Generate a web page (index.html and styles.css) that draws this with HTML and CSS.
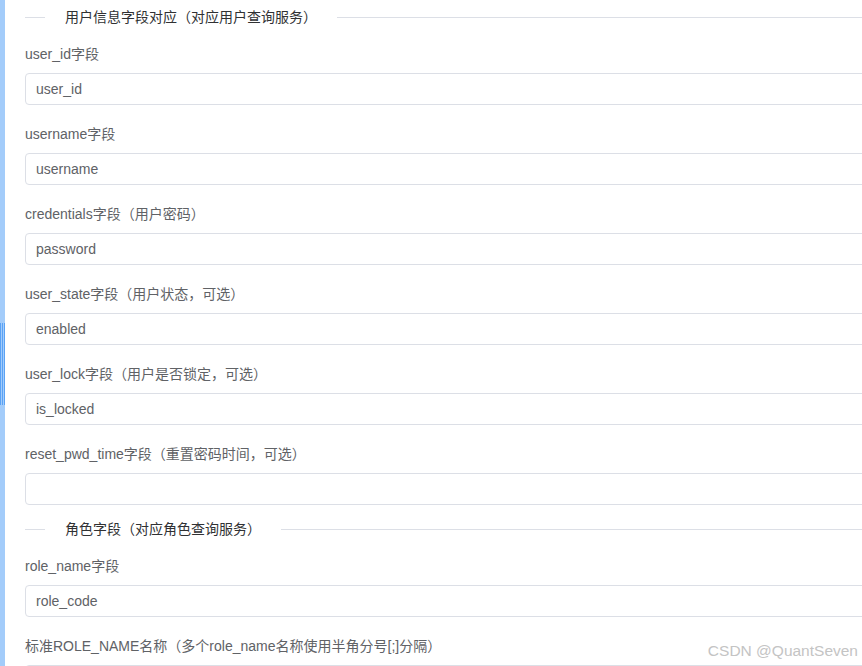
FILE: index.html
```html
<!DOCTYPE html>
<html lang="zh-CN">
<head>
    <meta charset="UTF-8">
    <meta name="viewport" content="width=device-width, initial-scale=1.0">
    <title>字段映射配置</title>
    <link rel="stylesheet" href="styles.css">
</head>
<body>
    <div class="page">
        <!-- left edge of the side panel -->
        <div class="edge"><div class="edge-thumb"></div></div>

        <div class="form">
            <!-- user info fields -->
            <div class="divider"><span>用户信息字段对应（对应用户查询服务）</span></div>

            <div class="field">
                <label>user_id字段</label>
                <input type="text" value="user_id">
            </div>
            <div class="field">
                <label>username字段</label>
                <input type="text" value="username">
            </div>
            <div class="field">
                <label>credentials字段（用户密码）</label>
                <input type="text" value="password">
            </div>
            <div class="field">
                <label>user_state字段（用户状态，可选）</label>
                <input type="text" value="enabled">
            </div>
            <div class="field">
                <label>user_lock字段（用户是否锁定，可选）</label>
                <input type="text" value="is_locked">
            </div>
            <div class="field">
                <label>reset_pwd_time字段（重置密码时间，可选）</label>
                <input type="text" value="">
            </div>

            <!-- role fields -->
            <div class="divider"><span>角色字段（对应角色查询服务）</span></div>

            <div class="field">
                <label>role_name字段</label>
                <input type="text" value="role_code">
            </div>
            <div class="field">
                <label>标准ROLE_NAME名称（多个role_name名称使用半角分号[;]分隔）</label>
                <input type="text" value="">
            </div>
        </div>
    </div>

    <div class="watermark">CSDN @QuantSeven</div>
</body>
</html>
```

FILE: styles.css
```css
html, body {
    margin: 0;
    height: 100%;
    overflow: hidden;
}
body {
    font-family: "Liberation Sans", "Noto Sans CJK SC", sans-serif;
    font-size: 14px;
    color: #606266;
    background: #fff;
}
.page {
    display: flex;
    height: 100%;
}
.edge {
    flex: 0 0 5px;
    background-color: #a3ccfa;
}
.edge-thumb {
    margin-top: 323px;
    height: 82px;
    background: repeating-linear-gradient(90deg, #5aa2f5 0 1px, #a3ccfa 1px 2px);
}
.form {
    flex: 0 0 850px;
    margin-left: 20px;
    padding-top: 11px;
}
.divider {
    display: flex;
    align-items: center;
    height: 12px;
    margin-bottom: 20px;
}
.divider::before {
    content: "";
    flex: 0 0 20px;
    border-top: 1px solid #dcdfe6;
}
.divider::after {
    content: "";
    flex: 1;
    border-top: 1px solid #dcdfe6;
}
.divider span {
    padding: 0 20px;
    color: #303133;
    line-height: 22px;
    white-space: nowrap;
}
.field {
    display: flex;
    flex-direction: column;
    gap: 8px;
    margin-bottom: 18px;
}
.field label {
    line-height: 22px;
    color: #606266;
}
.field input {
    box-sizing: border-box;
    height: 32px;
    width: 100%;
    padding: 0 10px;
    border: 1px solid #dcdfe6;
    border-radius: 4px;
    font-family: inherit;
    font-size: 14px;
    color: #606266;
    outline: none;
}
.watermark {
    position: absolute;
    right: 4px;
    bottom: 6px;
    font-size: 15.5px;
    color: #c4c4c4;
}
```
